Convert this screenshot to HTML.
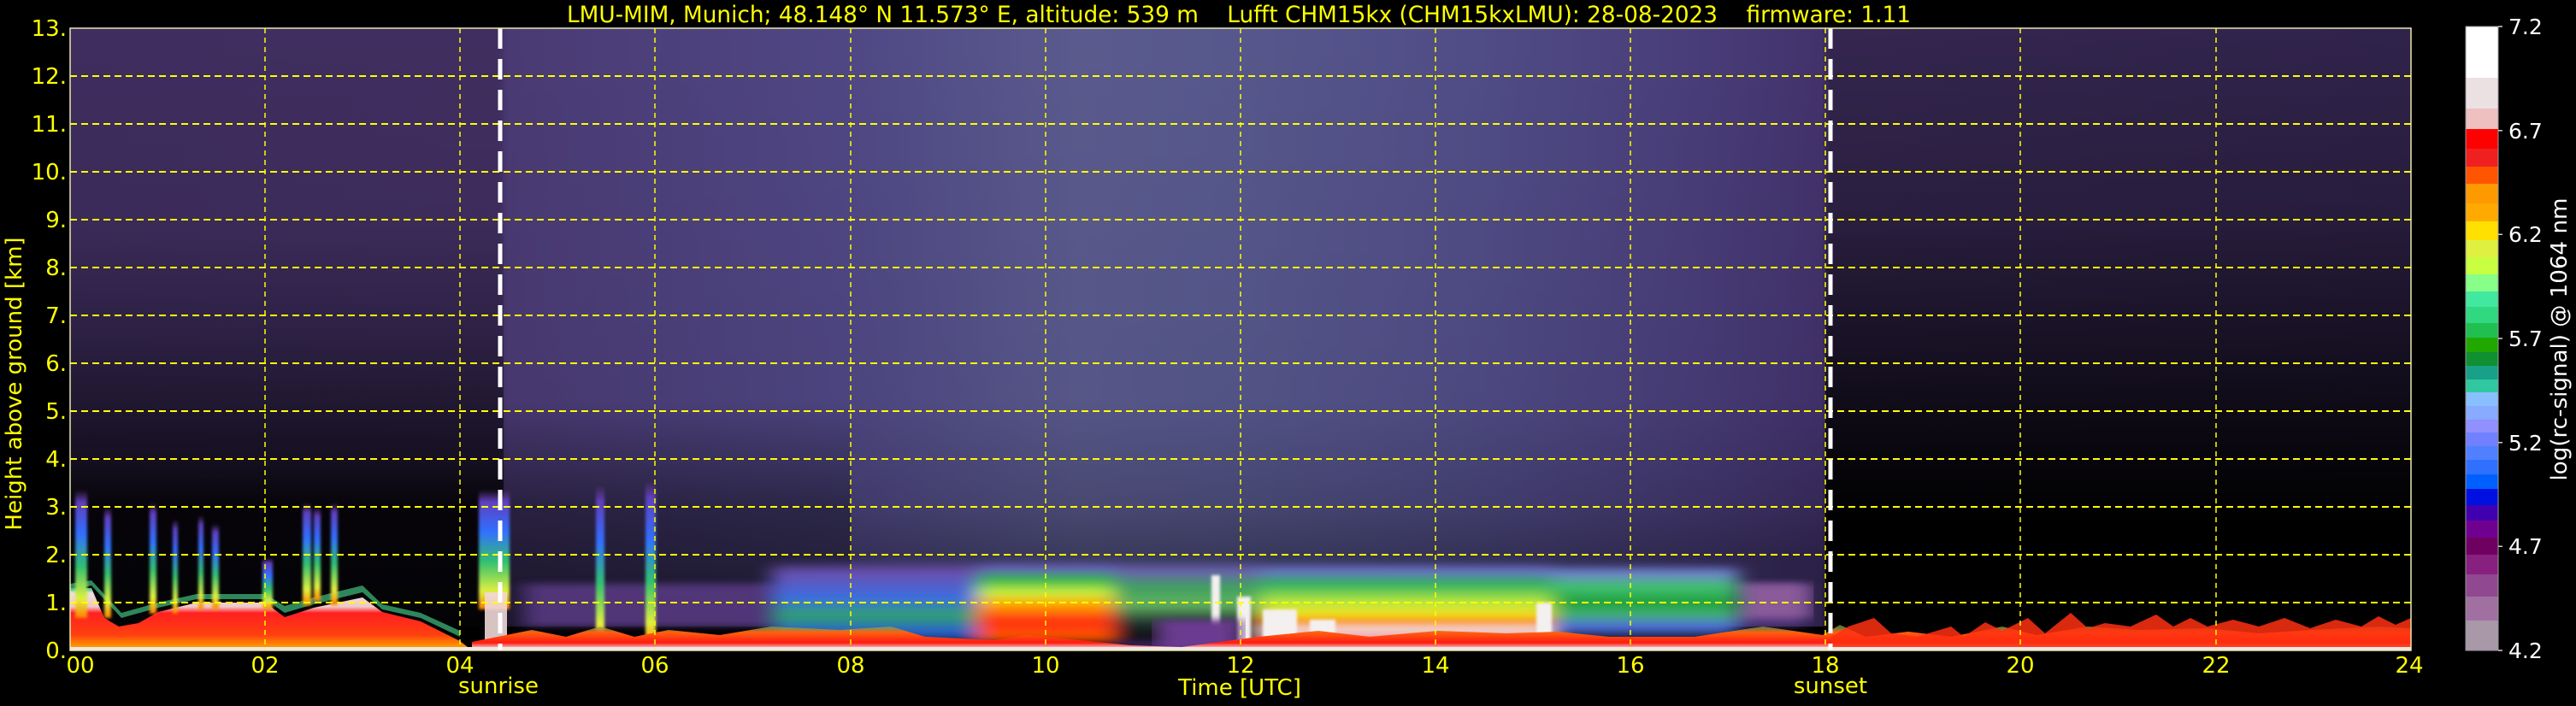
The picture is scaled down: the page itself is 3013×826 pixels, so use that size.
<!DOCTYPE html>
<html><head><meta charset="utf-8"><style>
html,body{margin:0;padding:0;background:#000;width:3013px;height:826px;overflow:hidden}
svg{display:block}
text{font-family:"DejaVu Sans","Liberation Sans",sans-serif}
</style></head><body>
<svg width="3013" height="826" viewBox="0 0 3013 826" xmlns="http://www.w3.org/2000/svg">
<defs>
<linearGradient id="gh" x1="0" y1="0" x2="2738" y2="0" gradientUnits="userSpaceOnUse">
<stop offset="0" stop-color="#3e2d5e"/><stop offset="0.183" stop-color="#402e60"/>
<stop offset="0.187" stop-color="#4a3a74"/><stop offset="0.33" stop-color="#4f4784"/>
<stop offset="0.43" stop-color="#5a5a8e"/><stop offset="0.5" stop-color="#56578c"/>
<stop offset="0.6" stop-color="#504c86"/><stop offset="0.7" stop-color="#483c78"/>
<stop offset="0.748" stop-color="#42326c"/><stop offset="0.752" stop-color="#34264f"/>
<stop offset="1" stop-color="#30234b"/>
</linearGradient>
<linearGradient id="dL" x1="0" y1="0" x2="0" y2="728" gradientUnits="userSpaceOnUse">
<stop offset="0" stop-color="#000" stop-opacity="0"/><stop offset="0.3" stop-color="#000" stop-opacity="0.05"/>
<stop offset="0.5" stop-color="#000" stop-opacity="0.3"/><stop offset="0.69" stop-color="#000" stop-opacity="0.65"/>
<stop offset="0.77" stop-color="#000" stop-opacity="0.9"/><stop offset="1" stop-color="#000" stop-opacity="0.96"/>
</linearGradient>
<linearGradient id="dM" x1="0" y1="0" x2="0" y2="728" gradientUnits="userSpaceOnUse">
<stop offset="0" stop-color="#000" stop-opacity="0"/><stop offset="0.6" stop-color="#000" stop-opacity="0.05"/>
<stop offset="0.77" stop-color="#000" stop-opacity="0.45"/><stop offset="1" stop-color="#000" stop-opacity="0.7"/>
</linearGradient>
<linearGradient id="dC" x1="0" y1="0" x2="0" y2="728" gradientUnits="userSpaceOnUse">
<stop offset="0" stop-color="#000" stop-opacity="0"/><stop offset="0.6" stop-color="#000" stop-opacity="0.05"/>
<stop offset="0.77" stop-color="#000" stop-opacity="0.2"/><stop offset="0.85" stop-color="#000" stop-opacity="0.35"/>
</linearGradient>
<linearGradient id="dR" x1="0" y1="0" x2="0" y2="728" gradientUnits="userSpaceOnUse">
<stop offset="0" stop-color="#000" stop-opacity="0"/><stop offset="0.3" stop-color="#000" stop-opacity="0.2"/>
<stop offset="0.55" stop-color="#000" stop-opacity="0.6"/><stop offset="0.72" stop-color="#000" stop-opacity="0.9"/>
<stop offset="0.8" stop-color="#000" stop-opacity="1"/>
</linearGradient>
<linearGradient id="bA" x1="0" y1="0" x2="0" y2="1">
<stop offset="0" stop-color="#6a50b0" stop-opacity="0"/><stop offset="0.15" stop-color="#6a50b0"/>
<stop offset="0.45" stop-color="#3b6ee0"/><stop offset="0.65" stop-color="#30a070"/>
<stop offset="0.85" stop-color="#2a60d0"/><stop offset="1" stop-color="#100818"/>
</linearGradient>
<linearGradient id="bB" x1="0" y1="0" x2="0" y2="1">
<stop offset="0" stop-color="#6a60c0" stop-opacity="0"/><stop offset="0.1" stop-color="#6a60c0"/>
<stop offset="0.22" stop-color="#30b050"/><stop offset="0.38" stop-color="#c8f040"/>
<stop offset="0.52" stop-color="#ffaa00"/><stop offset="0.72" stop-color="#ff3010"/>
<stop offset="0.9" stop-color="#ff5500"/><stop offset="1" stop-color="#1a0a00"/>
</linearGradient>
<linearGradient id="bC" x1="0" y1="0" x2="0" y2="1">
<stop offset="0" stop-color="#6a60b0" stop-opacity="0"/><stop offset="0.12" stop-color="#6a60b0"/>
<stop offset="0.3" stop-color="#40a060"/><stop offset="0.5" stop-color="#60b060"/>
<stop offset="0.7" stop-color="#203030"/><stop offset="0.85" stop-color="#101010"/>
<stop offset="1" stop-color="#4a2a80"/>
</linearGradient>
<linearGradient id="bD" x1="0" y1="0" x2="0" y2="1">
<stop offset="0" stop-color="#6a70c8" stop-opacity="0"/><stop offset="0.1" stop-color="#6a70c8"/>
<stop offset="0.25" stop-color="#30b060"/><stop offset="0.45" stop-color="#b8e840"/>
<stop offset="0.6" stop-color="#f0e020"/><stop offset="0.68" stop-color="#ff8000"/>
<stop offset="0.75" stop-color="#f0e0e0"/><stop offset="0.9" stop-color="#f08080"/>
<stop offset="1" stop-color="#ff2020"/>
</linearGradient>
<linearGradient id="bE" x1="0" y1="0" x2="0" y2="1">
<stop offset="0" stop-color="#7080d0" stop-opacity="0"/><stop offset="0.12" stop-color="#7080d0"/>
<stop offset="0.3" stop-color="#40c070"/><stop offset="0.5" stop-color="#20a040"/>
<stop offset="0.65" stop-color="#40b070"/><stop offset="0.8" stop-color="#5070e0"/>
<stop offset="1" stop-color="#000"/>
</linearGradient>
<linearGradient id="sp" x1="0" y1="0" x2="0" y2="1">
<stop offset="0" stop-color="#7040a0" stop-opacity="0"/><stop offset="0.1" stop-color="#6040c0"/>
<stop offset="0.35" stop-color="#3070ff"/><stop offset="0.6" stop-color="#30c070"/>
<stop offset="0.85" stop-color="#e0f040"/><stop offset="1" stop-color="#ff8000"/>
</linearGradient>
<linearGradient id="low" x1="0" y1="0" x2="0" y2="1">
<stop offset="0" stop-color="#30c070"/><stop offset="0.08" stop-color="#f0e0e0"/>
<stop offset="0.3" stop-color="#f0c8c8"/><stop offset="0.4" stop-color="#ff2020"/>
<stop offset="0.75" stop-color="#ff4010"/><stop offset="0.92" stop-color="#ff9000"/>
<stop offset="1" stop-color="#ffb000"/>
</linearGradient>
<linearGradient id="red" x1="0" y1="0" x2="0" y2="1">
<stop offset="0" stop-color="#60c060" stop-opacity="0.6"/><stop offset="0.3" stop-color="#ff6010"/>
<stop offset="0.7" stop-color="#ff1a10"/><stop offset="0.9" stop-color="#f8c0c0"/><stop offset="1" stop-color="#f0f0f0"/>
</linearGradient>
<filter id="bl" x="-5%" y="-20%" width="110%" height="140%"><feGaussianBlur stdDeviation="12 4"/></filter>
<filter id="bl2"><feGaussianBlur stdDeviation="1.5"/></filter>
<clipPath id="pc"><rect x="0" y="0" width="2738" height="728"/></clipPath>
</defs>

<g transform="translate(82,33)" clip-path="url(#pc)">
<rect x="0" y="0" width="2738" height="728" fill="#000"/>
<rect x="0" y="0" width="2738" height="700" fill="url(#gh)"/>
<rect x="0" y="0" width="507" height="728" fill="url(#dL)"/>
<rect x="507" y="0" width="406" height="728" fill="url(#dM)"/>
<rect x="913" y="0" width="1140" height="728" fill="url(#dC)"/>
<rect x="2053" y="0" width="685" height="728" fill="url(#dR)"/>

<rect x="530" y="650" width="1500" height="50" fill="#5a3a85" opacity="0.85" filter="url(#bl)"/>
<rect x="1950" y="650" width="85" height="40" fill="#8a5a9a" filter="url(#bl)"/>

<g filter="url(#bl)">
<rect x="821" y="622" width="240" height="100" fill="url(#bA)"/>
<rect x="1061" y="622" width="160" height="100" fill="url(#bB)"/>
<rect x="1221" y="622" width="170" height="106" fill="url(#bC)"/>
<rect x="1391" y="624" width="343" height="104" fill="url(#bD)"/>
<rect x="1734" y="626" width="217" height="92" fill="url(#bE)"/>
</g>
<g fill="#f4f0f0" filter="url(#bl2)">
<rect x="1335" y="640" width="10" height="88"/><rect x="1365" y="665" width="16" height="63"/>
<rect x="1395" y="680" width="40" height="48"/><rect x="1450" y="692" width="30" height="36"/>
<rect x="1715" y="672" width="18" height="56"/>
</g>
<rect x="1270" y="692" width="100" height="36" fill="#6a3a90" filter="url(#bl)"/>

<polygon points="0,728 0,655 25,655 40,690 57,700 80,696 103,683 148,672 228,672 251,689 285,678 342,666 365,683 410,694 456,717 470,728" fill="url(#low)"/>
<polygon points="0,658 25,652 60,690 103,678 148,668 228,668 251,684 285,674 342,660 365,680 410,690 456,712 456,705 410,684 365,674 342,652 285,666 251,676 228,662 148,662 103,672 60,684 25,646 0,650" fill="#40c080" opacity="0.7"/>
<g fill="url(#sp)" filter="url(#bl2)">
<rect x="6" y="540" width="14" height="150"/><rect x="40" y="560" width="8" height="130"/>
<rect x="93" y="555" width="8" height="130"/><rect x="120" y="575" width="6" height="110"/>
<rect x="150" y="570" width="6" height="110"/><rect x="166" y="580" width="8" height="100"/>
<rect x="225" y="620" width="12" height="60"/><rect x="272" y="555" width="10" height="120"/>
<rect x="285" y="560" width="8" height="110"/><rect x="305" y="555" width="8" height="120"/>
<rect x="478" y="540" width="36" height="140"/><rect x="615" y="535" width="10" height="190"/>
<rect x="673" y="530" width="12" height="195"/>
</g>
<rect x="485" y="660" width="26" height="68" fill="#f0d8d8" opacity="0.9"/>
<polygon points="470,728 470,718 540,704 580,712 620,700 660,712 700,704 760,710 820,700 900,704 960,700 1000,712 1080,716 1120,710 1180,716 1240,722 1300,724 1390,712 1460,705 1520,712 1600,705 1680,708 1740,706 1800,712 1900,712 1980,700 2050,710 2070,698 2100,712 2150,706 2200,712 2260,700 2300,710 2360,700 2420,704 2500,702 2560,708 2620,704 2700,700 2738,702 2738,728" fill="url(#red)"/>
<polygon points="2060,728 2060,712 2080,700 2110,690 2130,708 2160,712 2200,700 2215,712 2240,695 2260,705 2290,690 2310,708 2340,684 2360,702 2380,696 2410,700 2440,686 2460,700 2480,690 2500,700 2530,692 2560,700 2590,690 2620,702 2650,692 2680,700 2700,688 2720,698 2738,690 2738,728" fill="#ff3010" opacity="0.85"/>
<rect x="0" y="724" width="2738" height="4" fill="#f0e8e8"/>

<g stroke="#ffff00" stroke-width="2" stroke-dasharray="8 5" fill="none">
<path d="M0 56H2738M0 112H2738M0 168H2738M0 224H2738M0 280H2738M0 336H2738M0 392H2738M0 448H2738M0 504H2738M0 560H2738M0 616H2738M0 672H2738"/>
</g>
<g stroke="#ffff00" stroke-width="1.5" stroke-dasharray="6 5" fill="none">
<path d="M228 0V728M456 0V728M684 0V728M913 0V728M1141 0V728M1369 0V728M1597 0V728M1825 0V728M2053 0V728M2281 0V728M2510 0V728"/>
</g>
<g stroke="#ffffff" stroke-width="5" stroke-dasharray="24 12" fill="none">
<path d="M503 0V728M2059 0V728"/>
</g>
</g>
<rect x="82" y="33" width="2738" height="728" fill="none" stroke="#e8e8b0" stroke-width="1.5"/>

<text x="663" y="26" font-size="27" fill="#ffff00" textLength="1572" lengthAdjust="spacingAndGlyphs" xml:space="preserve">LMU-MIM, Munich; 48.148° N 11.573° E, altitude: 539 m    Lufft CHM15kx (CHM15kxLMU): 28-08-2023    firmware: 1.11</text>

<g font-size="26" fill="#ffff00" text-anchor="end">
<text x="78" y="42">13.</text><text x="78" y="98">12.</text><text x="78" y="154">11.</text>
<text x="78" y="210">10.</text><text x="78" y="266">9.</text><text x="78" y="322">8.</text>
<text x="78" y="378">7.</text><text x="78" y="434">6.</text><text x="78" y="490">5.</text>
<text x="78" y="546">4.</text><text x="78" y="602">3.</text><text x="78" y="658">2.</text>
<text x="78" y="714">1.</text><text x="78" y="770">0.</text>
</g>
<text transform="translate(25,449) rotate(-90)" font-size="26" fill="#ffff00" text-anchor="middle">Height above ground [km]</text>

<g font-size="26" fill="#ffff00" text-anchor="middle">
<text x="94" y="787">00</text><text x="310" y="787">02</text><text x="538" y="787">04</text>
<text x="766" y="787">06</text><text x="995" y="787">08</text><text x="1223" y="787">10</text>
<text x="1451" y="787">12</text><text x="1679" y="787">14</text><text x="1907" y="787">16</text>
<text x="2135" y="787">18</text><text x="2363" y="787">20</text><text x="2592" y="787">22</text>
<text x="2818" y="787">24</text>
<text x="583" y="811">sunrise</text><text x="2141" y="811">sunset</text>
<text x="1450" y="813">Time [UTC]</text>
</g>

<g>
<rect x="2884" y="31" width="38" height="60" fill="#ffffff"/>
<rect x="2884" y="91" width="38" height="36" fill="#ebe0e2"/>
<rect x="2884" y="127" width="38" height="24" fill="#eec0c0"/>
<rect x="2884" y="151" width="38" height="23" fill="#ff0000"/>
<rect x="2884" y="174" width="38" height="21" fill="#f02020"/>
<rect x="2884" y="195" width="38" height="20" fill="#ff5500"/>
<rect x="2884" y="215" width="38" height="23" fill="#ff9900"/>
<rect x="2884" y="238" width="38" height="21" fill="#ffaa00"/>
<rect x="2884" y="259" width="38" height="22" fill="#ffe000"/>
<rect x="2884" y="281" width="38" height="20" fill="#e0f040"/>
<rect x="2884" y="301" width="38" height="20" fill="#c8ff40"/>
<rect x="2884" y="321" width="38" height="20" fill="#88ff88"/>
<rect x="2884" y="341" width="38" height="18" fill="#40e8a0"/>
<rect x="2884" y="359" width="38" height="19" fill="#30d880"/>
<rect x="2884" y="378" width="38" height="17" fill="#20c050"/>
<rect x="2884" y="395" width="38" height="17" fill="#20a800"/>
<rect x="2884" y="412" width="38" height="16" fill="#109030"/>
<rect x="2884" y="428" width="38" height="16" fill="#18a088"/>
<rect x="2884" y="444" width="38" height="15" fill="#30c8a0"/>
<rect x="2884" y="459" width="38" height="16" fill="#88c0ff"/>
<rect x="2884" y="475" width="38" height="16" fill="#88aaff"/>
<rect x="2884" y="491" width="38" height="15" fill="#9090ff"/>
<rect x="2884" y="506" width="38" height="16" fill="#7080ff"/>
<rect x="2884" y="522" width="38" height="16" fill="#5080ff"/>
<rect x="2884" y="538" width="38" height="17" fill="#3070ff"/>
<rect x="2884" y="555" width="38" height="17" fill="#0060ff"/>
<rect x="2884" y="572" width="38" height="19" fill="#0010e0"/>
<rect x="2884" y="591" width="38" height="18" fill="#4000b0"/>
<rect x="2884" y="609" width="38" height="20" fill="#700090"/>
<rect x="2884" y="629" width="38" height="20" fill="#700060"/>
<rect x="2884" y="649" width="38" height="23" fill="#882080"/>
<rect x="2884" y="672" width="38" height="26" fill="#904890"/>
<rect x="2884" y="698" width="38" height="28" fill="#a070a0"/>
<rect x="2884" y="726" width="38" height="35" fill="#a898a8"/>
<rect x="2884" y="31" width="38" height="730" fill="none" stroke="#999" stroke-width="1"/>
<path d="M2922 31h5M2922 152.7h5M2922 274.3h5M2922 396h5M2922 517.7h5M2922 639.3h5M2922 761h5" stroke="#ccc" stroke-width="1.5"/>
</g>
<g font-size="25" fill="#ffffff">
<text x="2934" y="40">7.2</text><text x="2934" y="162">6.7</text><text x="2934" y="283">6.2</text>
<text x="2934" y="405">5.7</text><text x="2934" y="527">5.2</text><text x="2934" y="648">4.7</text>
<text x="2934" y="770">4.2</text>
</g>
<text transform="translate(3002,397) rotate(-90)" font-size="26" fill="#ffffff" text-anchor="middle" textLength="331" lengthAdjust="spacingAndGlyphs">log(rc-signal) @ 1064 nm</text>
</svg>
</body></html>
